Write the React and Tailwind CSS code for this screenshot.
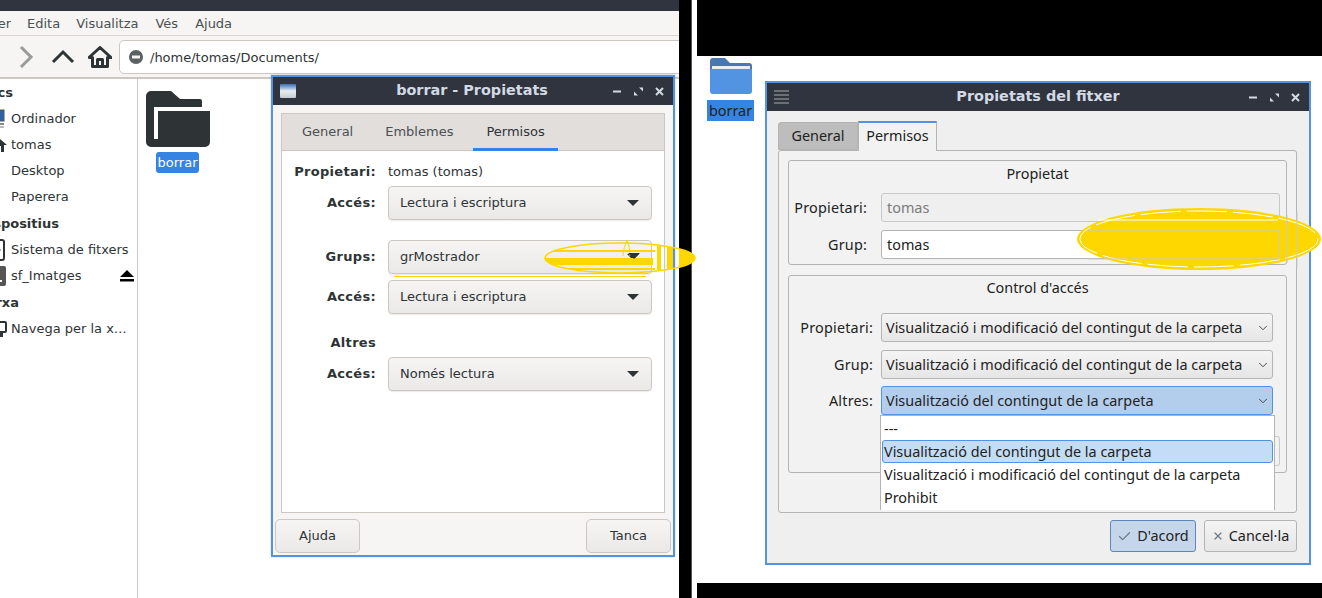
import { ChevronDown, Check, X } from 'lucide-react'

const dejavu = { fontFamily: '"DejaVu Sans", sans-serif' }
const ubuntu = { fontFamily: '"Noto Sans", sans-serif' }

function WinButtons() {
  return (
    <div className="flex items-center gap-[10px] text-[#d3dae3]">
      <svg width="11" height="11" viewBox="0 0 11 11"><rect x="1" y="4.500" width="8" height="2" fill="currentColor" /></svg>
      <svg width="11" height="11" viewBox="0 0 11 11"><path d="M6 1.500h4v4zM1 5.500l4 4H1z" fill="currentColor" /></svg>
      <svg width="11" height="11" viewBox="0 0 11 11"><path d="M2 2l7 7M9 2l-7 7" stroke="currentColor" strokeWidth="2" /></svg>
    </div>
  )
}

function SideRow({ children, icon, eject }) {
  return (
    <div className="h-[26px] flex items-center text-[13px] text-[#2e3436] relative whitespace-nowrap">
      <div className="w-[8px] mr-[3px] h-[26px] overflow-hidden flex items-center justify-end shrink-0">{icon}</div>
      <span>{children}</span>
      {eject && (
        <svg className="absolute left-[120px] top-[7px]" width="14" height="12" viewBox="0 0 14 12"><path d="M7 0l7 7H0z M0 9h14v2.500H0z" fill="#000" /></svg>
      )}
    </div>
  )
}

function SideHead({ width, children, className = '' }) {
  return (
    <div className={`h-[26px] flex items-center justify-end font-bold text-[13px] text-[#2e3436] whitespace-nowrap ${className}`} style={{ width }}>
      {children}
    </div>
  )
}

function GtkCombo({ text, className = '' }) {
  return (
    <div className={`h-[34px] flex items-center justify-between pl-[11px] pr-[12px] rounded-[4px] border border-[#cdc7c2] bg-gradient-to-b from-[#f6f5f4] to-[#ebe9e7] shadow-[0_1px_1px_rgba(0,0,0,0.08)] text-[13px] text-[#2e3436] ${className}`}>
      <span>{text}</span>
      <svg width="12" height="6" viewBox="0 0 12 6"><path d="M0 0h12L6 6z" fill="#2e3436" /></svg>
    </div>
  )
}

function GtkLabel({ children, className = '' }) {
  return <div className={`w-[94px] text-right font-bold text-[13px] tracking-[0.3px] text-[#2e3436] ${className}`}>{children}</div>
}

function GtkButton({ children }) {
  return (
    <div className="w-[85px] h-[34px] flex items-center justify-center rounded-[5px] border border-[#cdc7c2] bg-gradient-to-b from-[#f6f5f4] to-[#ebe9e7] text-[13px] text-[#2e3436]">
      {children}
    </div>
  )
}

function FileManager() {
  return (
    <div className="w-[679px] h-full flex flex-col bg-white overflow-hidden shrink-0" style={dejavu}>
      <div className="h-[11px] bg-[#2f343f] shrink-0" />
      <div className="h-[25px] pt-[1px] bg-[#f6f5f4] border-b border-[#d8d5d1] flex items-center gap-[16px] text-[13px] text-[#4b5052] shrink-0 pl-[27px]">
        <span className="-ml-[27px] w-[11px] overflow-hidden flex justify-end">Fitxer</span>
        <span>Edita</span>
        <span>Visualitza</span>
        <span className="ml-[1px]">Vés</span>
        <span className="ml-[1px]">Ajuda</span>
      </div>
      <div className="h-[43px] pt-[1px] bg-[#f6f5f4] border-b-2 border-[#cdc7c2] flex items-center shrink-0">
        <svg className="ml-[19px]" width="15" height="24" viewBox="0 0 15 24"><path d="M2 2l10 10L2 22" fill="none" stroke="#9a9b9b" strokeWidth="3" /></svg>
        <svg className="ml-[17px]" width="24" height="16" viewBox="0 0 24 16"><path d="M2 13L12 3l10 10" fill="none" stroke="#2e3436" strokeWidth="3" /></svg>
        <svg className="ml-[13px]" width="24" height="22" viewBox="0 0 24 22"><path d="M12 1.500L1 11.500h3.500V20.500h15V11.500H23z M9.500 20.500v-7h5v7" fill="none" stroke="#2e3436" strokeWidth="3" strokeLinejoin="round" /></svg>
        <div className="ml-[7px] flex-1 h-[34px] mr-[-8px] rounded-[5px] border border-[#cdc7c2] bg-white flex items-center pl-[9px] gap-[7px] text-[13px] text-[#2e3436]">
          <svg width="14" height="14" viewBox="0 0 14 14"><circle cx="7" cy="7" r="7" fill="#5b6062" /><rect x="3" y="5.500" width="8" height="3" fill="#f6f5f4" /></svg>
          <span className="pt-[1px]">/home/tomas/Documents/</span>
        </div>
      </div>
      <div className="flex-1 flex min-h-0">
        <div className="w-[138px] border-r border-[#cdc7c2] pt-[1px] shrink-0 overflow-hidden">
          <SideHead width={13}>Llocs</SideHead>
          <SideRow icon={<svg className="shrink-0 mr-[3px]" width="16" height="20" viewBox="0 0 16 20"><rect x="1" y="1" width="14" height="11" fill="#2a64a8" stroke="#555" /><rect x="1" y="14" width="14" height="2" fill="#888" /><rect x="1" y="17" width="14" height="2" fill="#bbb" /></svg>}>Ordinador</SideRow>
          <SideRow icon={<svg className="shrink-0 mr-[1px]" width="16" height="16" viewBox="0 0 16 16"><path d="M8 1L0 8h3v7h10V8h3z" fill="#2e3436" /><rect x="6" y="9" width="4" height="6" fill="#fff" /></svg>}>tomas</SideRow>
          <SideRow>Desktop</SideRow>
          <SideRow>Paperera</SideRow>
          <SideHead width={59} className="mt-[1px]">Dispositius</SideHead>
          <SideRow icon={<svg className="shrink-0 mr-[3px]" width="16" height="22" viewBox="0 0 16 22"><rect x="1" y="1" width="14" height="20" rx="2" fill="#fff" stroke="#2e3436" strokeWidth="2" /><circle cx="10" cy="11" r="1.500" fill="#2e3436" /></svg>}>Sistema de fitxers</SideRow>
          <SideRow eject icon={<svg className="shrink-0 mr-[1px]" width="16" height="20" viewBox="0 0 16 20"><rect x="1" y="0" width="14" height="20" rx="2" fill="#555" /><rect x="3" y="14" width="8" height="2" fill="#fff" /></svg>}>sf_Imatges</SideRow>
          <SideHead width={19} className="mt-[1px]">Xarxa</SideHead>
          <SideRow icon={<svg className="shrink-0 mr-[1px]" width="16" height="16" viewBox="0 0 16 16"><rect x="1" y="1" width="14" height="10" rx="1" fill="#fff" stroke="#2e3436" strokeWidth="2" /><rect x="4" y="12" width="8" height="4" fill="#2e3436" /></svg>}>Navega per la x…</SideRow>
        </div>
        <div className="flex-1 pt-[12px] pl-[8px]">
          <div className="w-[64px] flex flex-col items-center">
            <svg width="64" height="56" viewBox="0 0 64 56">
              <path d="M0 5a5 5 0 0 1 5-5h20l9 8h20a2 2 0 0 1 2 2v6h8v35a5 5 0 0 1-5 5H5a5 5 0 0 1-5-5z" fill="#2e3436" />
              <path d="M8 16h56v4H12v28H8z" fill="#fff" />
            </svg>
            <div className="mt-[5px] -ml-[1px] h-[21px] rounded-[3px] bg-[#3584e4] text-white text-[13px] leading-[21px] w-[43px] text-center">borrar</div>
          </div>
        </div>
      </div>
    </div>
  )
}

function NautilusDialog() {
  return (
    <div className="absolute left-[271px] top-[75px] w-[404px] h-[482px] border-2 border-[#5294e2] bg-[#f6f5f4] flex flex-col shadow-[0_0_2px_rgba(0,0,0,0.2)]" style={dejavu}>
      <div className="h-[28px] bg-[#2f343f] flex items-center justify-between pl-[7px] pr-[8px] shrink-0 relative">
        <div className="w-[16px] h-[14px] rounded-[1px] bg-gradient-to-b from-[#3a70b5] via-[#e8edf2] to-[#c5cad0]" />
        <div className="absolute inset-0 -ml-[2px] flex items-center justify-center font-bold text-[14.4px] text-[#d3dae3]">borrar - Propietats</div>
        <WinButtons />
      </div>
      <div className="mt-[8px] mx-[8px] h-[400px] border border-[#cdc7c2] bg-white flex flex-col shrink-0">
        <div className="h-[37px] bg-[#e1dedb] border-b border-[#cdc7c2] flex text-[13px] text-[#4b5052] shrink-0">
          <div className="ml-[20px] pt-[8px]">General</div>
          <div className="ml-[32px] pt-[8px]">Emblemes</div>
          <div className="ml-[20px] px-[13px] pt-[8px] border-b-[3px] border-[#3584e4] h-[37px] -mr-[1px] text-[#2e3436]">Permisos</div>
        </div>
        <div className="flex items-center h-[20px] mt-[11px] gap-[12px]">
          <GtkLabel>Propietari:</GtkLabel>
          <span className="text-[13px] text-[#2e3436]">tomas (tomas)</span>
        </div>
        <div className="flex items-center mt-[4px] gap-[12px]">
          <GtkLabel>Accés:</GtkLabel>
          <GtkCombo text="Lectura i escriptura" className="w-[264px]" />
        </div>
        <div className="flex items-center mt-[20px] gap-[12px]">
          <GtkLabel>Grups:</GtkLabel>
          <GtkCombo text="grMostrador" className="w-[264px]" />
        </div>
        <div className="flex items-center mt-[6px] gap-[12px]">
          <GtkLabel>Accés:</GtkLabel>
          <GtkCombo text="Lectura i escriptura" className="w-[264px]" />
        </div>
        <div className="flex items-center h-[20px] mt-[19px]">
          <GtkLabel>Altres</GtkLabel>
        </div>
        <div className="flex items-center mt-[4px] gap-[12px]">
          <GtkLabel>Accés:</GtkLabel>
          <GtkCombo text="Només lectura" className="w-[264px]" />
        </div>
      </div>
      <div className="flex justify-between px-[2px] mt-[6px]">
        <GtkButton>Ajuda</GtkButton>
        <GtkButton>Tanca</GtkButton>
      </div>
    </div>
  )
}

function QtCombo({ text, active }) {
  return (
    <div className={`w-[392px] h-[29px] flex items-center justify-between pl-[4px] pr-[2px] rounded-[3px] border text-[14.4px] text-[#222] ${active ? 'border-[#5294e2] bg-[#b3cdec]' : 'border-[#b4b4b4] bg-gradient-to-b from-[#f4f4f4] to-[#e6e6e6]'}`}>
      <span>{text}</span>
      <ChevronDown size={14} strokeWidth={1.500} className="text-[#333]" />
    </div>
  )
}

function QtField({ label, children, className = '', labelPad = 'pr-[8px]' }) {
  return (
    <div className={`flex items-center ${className}`}>
      <div className={`w-[92px] text-right text-[14.4px] tracking-[0.2px] text-[#222] shrink-0 ${labelPad}`}>{label}</div>
      {children}
    </div>
  )
}

function QtDialog() {
  return (
    <div className="absolute left-[765px] top-[81px] w-[546px] h-[484px] border-[2px] border-[#5294e2] bg-[#efefef] flex flex-col" style={ubuntu}>
      <div className="h-[28px] bg-[#2f343f] flex items-center justify-between pl-[7px] pr-[8px] shrink-0 relative">
        <div className="w-[15px] flex flex-col gap-[2px]">
          <div className="h-[2px] bg-[#6b6f76]" /><div className="h-[2px] bg-[#6b6f76]" /><div className="h-[2px] bg-[#6b6f76]" /><div className="h-[2px] bg-[#6b6f76]" />
        </div>
        <div className="absolute inset-0 flex items-center justify-center font-bold text-[14.4px] text-[#d3dae3]" style={dejavu}>Propietats del fitxer</div>
        <WinButtons />
      </div>
      <div className="mt-[10px] ml-[11px] flex items-end h-[29px] shrink-0 relative z-10">
        <div className="w-[80px] h-[28px] pb-[1px] bg-[#bdbdbd] rounded-tl-[3px] border border-[#b4b4b4] flex items-center justify-center text-[14.4px] text-[#222]">General</div>
        <div className="w-[79px] h-[30px] pb-[3px] bg-[#f2f2f2] border-x border-[#b4b4b4] border-t-2 border-t-[#5294e2] -mb-[1px] flex items-center justify-center text-[14.4px] text-[#222]">Permisos</div>
      </div>
      <div className="ml-[11px] w-[519px] h-[363px] rounded-[3px] border border-[#b4b4b4] bg-[#f2f2f2] pt-[9px] px-[9px] shrink-0">
        <div className="h-[105px] rounded-[3px] border border-[#b4b4b4] flex flex-col">
          <div className="text-center text-[14.4px] text-[#222] h-[26px] pt-[2px]">Propietat</div>
          <QtField label="Propietari:" labelPad="pr-[14px]" className="h-[29px] mt-[6px]">
            <div className="w-[399px] h-[29px] rounded-[3px] border border-[#c8c8c8] bg-[#efefef] pl-[5px] flex items-center text-[14.4px] text-[#7b7b7b]">tomas</div>
          </QtField>
          <QtField label="Grup:" labelPad="pr-[14px]" className="h-[29px] mt-[8px]">
            <div className="w-[399px] h-[29px] rounded-[3px] border border-[#b4b4b4] bg-white pl-[5px] flex items-center text-[14.4px] text-[#222]">tomas</div>
          </QtField>
        </div>
        <div className="h-[198px] mt-[10px] rounded-[3px] border border-[#b4b4b4] flex flex-col relative">
          <div className="text-center text-[14.4px] text-[#222] h-[37px] pt-[1px]">Control d'accés</div>
          <QtField label="Propietari:">
            <QtCombo text="Visualització i modificació del contingut de la carpeta" />
          </QtField>
          <QtField label="Grup:" className="mt-[8px]">
            <QtCombo text="Visualització i modificació del contingut de la carpeta" />
          </QtField>
          <QtField label="Altres:" className="mt-[7px]">
            <QtCombo text="Visualització del contingut de la carpeta" active />
          </QtField>
          <div className="absolute left-[486px] top-[160px] w-[5px] h-[30px] border border-l-0 border-[#c8c8c8] rounded-r-[3px]" />
        </div>
      </div>
      <div className="flex justify-end gap-[8px] mt-[7px] ml-[11px] w-[519px]">
        <div className="w-[86px] h-[32px] rounded-[3px] border border-[#5b87bb] bg-[#c5d6ea] flex items-center justify-center gap-[5px] text-[14.4px] text-[#222]">
          <Check size={15} strokeWidth={2} className="text-[#6f7a86]" />D'acord
        </div>
        <div className="w-[93px] h-[32px] rounded-[3px] border border-[#b4b4b4] bg-gradient-to-b from-[#f4f4f4] to-[#e6e6e6] flex items-center justify-center gap-[5px] text-[14.4px] text-[#222]">
          <X size={12} strokeWidth={2.500} className="text-[#6f7a86]" />Cancel·la
        </div>
      </div>
    </div>
  )
}

function QtPopup() {
  return (
    <div className="absolute left-[880px] top-[415px] w-[395px] h-[95px] bg-white border-x border-t border-[#b4b4b4] text-[14.4px] text-[#222] flex flex-col px-[1px] pt-[1px]" style={ubuntu}>
      <div className="h-[23px] flex items-center pl-[2px]">---</div>
      <div className="h-[23px] flex items-center pl-[1px] rounded-[3px] border border-[#5294e2] bg-[#c5dcf7]">Visualització del contingut de la carpeta</div>
      <div className="h-[23px] flex items-center pl-[2px]">Visualització i modificació del contingut de la carpeta</div>
      <div className="h-[23px] flex items-center pl-[2px]">Prohibit</div>
    </div>
  )
}

function Annotations() {
  return (
    <svg className="absolute left-0 top-0 pointer-events-none" width="1322" height="598" viewBox="0 0 1322 598">
      <defs>
        <clipPath id="leftMark"><ellipse cx="620" cy="258" rx="75" ry="15" /></clipPath>
      </defs>
      <g clipPath="url(#leftMark)" fill="#ffd700">
        <rect x="545" y="250" width="110" height="2" />
        <rect x="545" y="258" width="108" height="7" />
        <rect x="545" y="268" width="110" height="2" />
        <rect x="657" y="243" width="4" height="30" />
        <rect x="667" y="243" width="6" height="30" />
        <rect x="679" y="243" width="16" height="30" />
      </g>
      <ellipse cx="620" cy="258" rx="75" ry="15" fill="none" stroke="#ffd700" strokeWidth="1.500" />
      <path d="M627 240c-2 5-4 10-4 16M627 240c2 5 3 10 3 16" fill="none" stroke="#ffd700" />
      <path d="M628 253h12l-6 6z" fill="#2e3436" />
      <rect x="394" y="276" width="252" height="1" fill="#ffd700" />
      <ellipse cx="1199" cy="239" rx="122" ry="31" fill="#ffd700" />
      <ellipse cx="1199" cy="239" rx="119" ry="28" fill="none" stroke="#fff" strokeDasharray="40 6" />
      <path d="M1098 220h180" fill="none" stroke="#fff" />
      <path d="M1088 230h191v29h-191" fill="none" stroke="#c8c8c8" />
      <path d="M1287 215v48M1297 212v55" stroke="#c8c8c8" />
    </svg>
  )
}

export default function App() {
  return (
    <div className="relative w-[1322px] h-[598px] flex overflow-hidden bg-white">
      <FileManager />
      <div className="w-[12px] bg-black shrink-0" />
      <div className="w-[1px] bg-[#555] shrink-0" />
      <div className="w-[5px] bg-white shrink-0" />
      <div className="flex-1 flex flex-col">
        <div className="h-[56px] bg-black shrink-0" />
        <div className="flex-1 bg-white pl-[10px] pt-[2px]" style={ubuntu}>
          <div className="w-[47px] flex flex-col items-center">
            <svg width="42" height="36" viewBox="0 0 42 36">
              <path d="M0 3a3 3 0 0 1 3-3h12l5 5h19a3 3 0 0 1 3 3v8H0z" fill="#4877b1" />
              <rect x="2" y="8" width="38" height="4" fill="#e8edf2" />
              <path d="M0 11h42v22a3 3 0 0 1-3 3H3a3 3 0 0 1-3-3z" fill="#5294e2" />
            </svg>
            <div className="mt-[6px] w-[47px] h-[21px] bg-[#3584e4] text-[14.4px] text-[#222] leading-[21px] text-center">borrar</div>
          </div>
        </div>
        <div className="h-[15px] bg-black shrink-0" />
      </div>
      <NautilusDialog />
      <QtDialog />
      <QtPopup />
      <Annotations />
    </div>
  )
}
